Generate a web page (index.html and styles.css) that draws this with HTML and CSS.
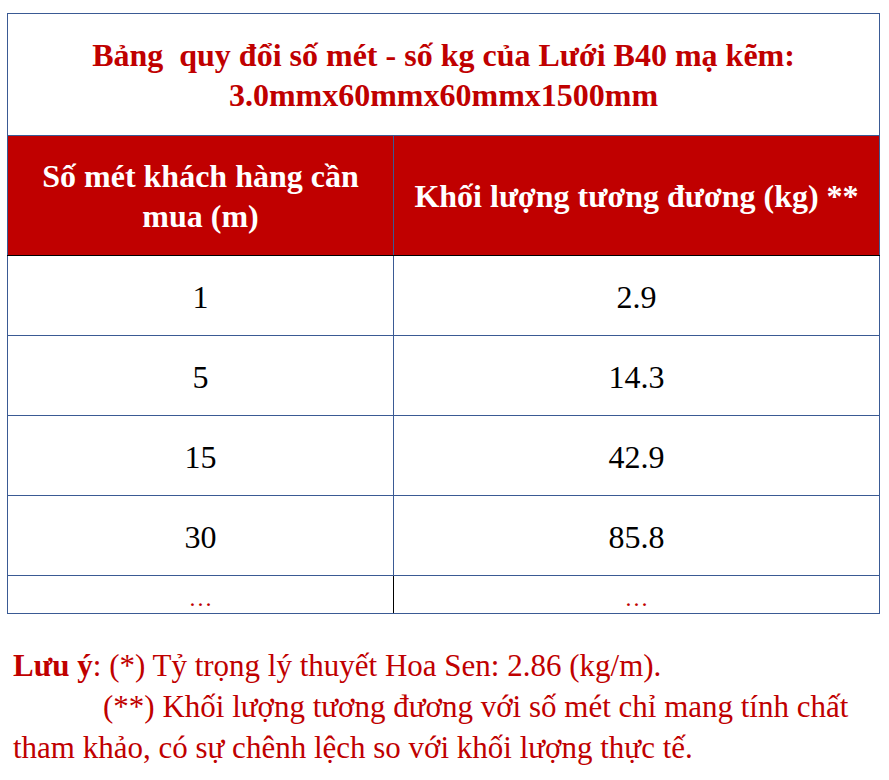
FILE: index.html
```html
<!DOCTYPE html>
<html lang="vi">
<head>
<meta charset="utf-8">
<link rel="stylesheet" href="styles.css">
</head>
<body>
<table class="tbl">
  <colgroup><col class="c1"><col class="c2"></colgroup>
  <tr class="title-row">
    <td colspan="2" class="title">Bảng&nbsp; quy đổi số mét - số kg của Lưới B40 mạ kẽm:<br>3.0mmx60mmx60mmx1500mm</td>
  </tr>
  <tr class="head-row">
    <th class="hb">Số mét khách hàng cần<br>mua (m)</th>
    <th>Khối lượng tương đương (kg) **</th>
  </tr>
  <tr class="row"><td class="lb">1</td><td>2.9</td></tr>
  <tr class="row"><td class="lb">5</td><td>14.3</td></tr>
  <tr class="row k"><td class="lb">15</td><td>42.9</td></tr>
  <tr class="row k"><td class="lb">30</td><td>85.8</td></tr>
  <tr class="last k"><td class="lb"><span class="dots">…</span></td><td><span class="dots">…</span></td></tr>
</table>
<div class="note">
  <p class="n1"><b>Lưu ý</b>: (*) Tỷ trọng lý thuyết Hoa Sen: 2.86 (kg/m).</p>
  <p class="n2">(**) Khối lượng tương đương với số mét chỉ mang tính chất tham khảo, có sự chênh lệch so với khối lượng thực tế.</p>
</div>
</body>
</html>
```
FILE: styles.css
```css
html, body { background: #fff; }
body {
  margin: 0;
  padding: 13px 11px 0 7px;
  font-family: "Liberation Serif", "Times New Roman", serif;
}
.tbl {
  border-collapse: collapse;
  width: 872px;
  table-layout: fixed;
}
.c1 { width: 386px; }
.c2 { width: 486px; }
.tbl td, .tbl th {
  border: 1.5px solid #3a5a94;
  text-align: center;
  padding: 0;
}
.title-row { height: 122px; }
.title {
  color: #c00000;
  font-weight: bold;
  font-size: 32px;
  line-height: 40px;
}
.head-row { height: 120px; }
.head-row th {
  background: #c00000;
  color: #fff;
  font-weight: bold;
  font-size: 32px;
  line-height: 40px;
}
.row { height: 80px; }
.row td {
  font-size: 32px;
  color: #000;
  padding-top: 3px;
}
.head-row th { border-bottom-color: #000; }
.k td.lb { border-top-color: #000; }
.last { height: 38px; }
.last td { vertical-align: bottom; line-height: 24px; padding-bottom: 0; }
.last td.lb { border-right-color: #000; }
.dots { color: #c00000; font-size: 24px; }
.note {
  color: #c00000;
  font-size: 31px;
  line-height: 41px;
  padding: 31px 0 0 6px;
}
.note p { margin: 0; }
.n2 { text-indent: 90px; }
```
